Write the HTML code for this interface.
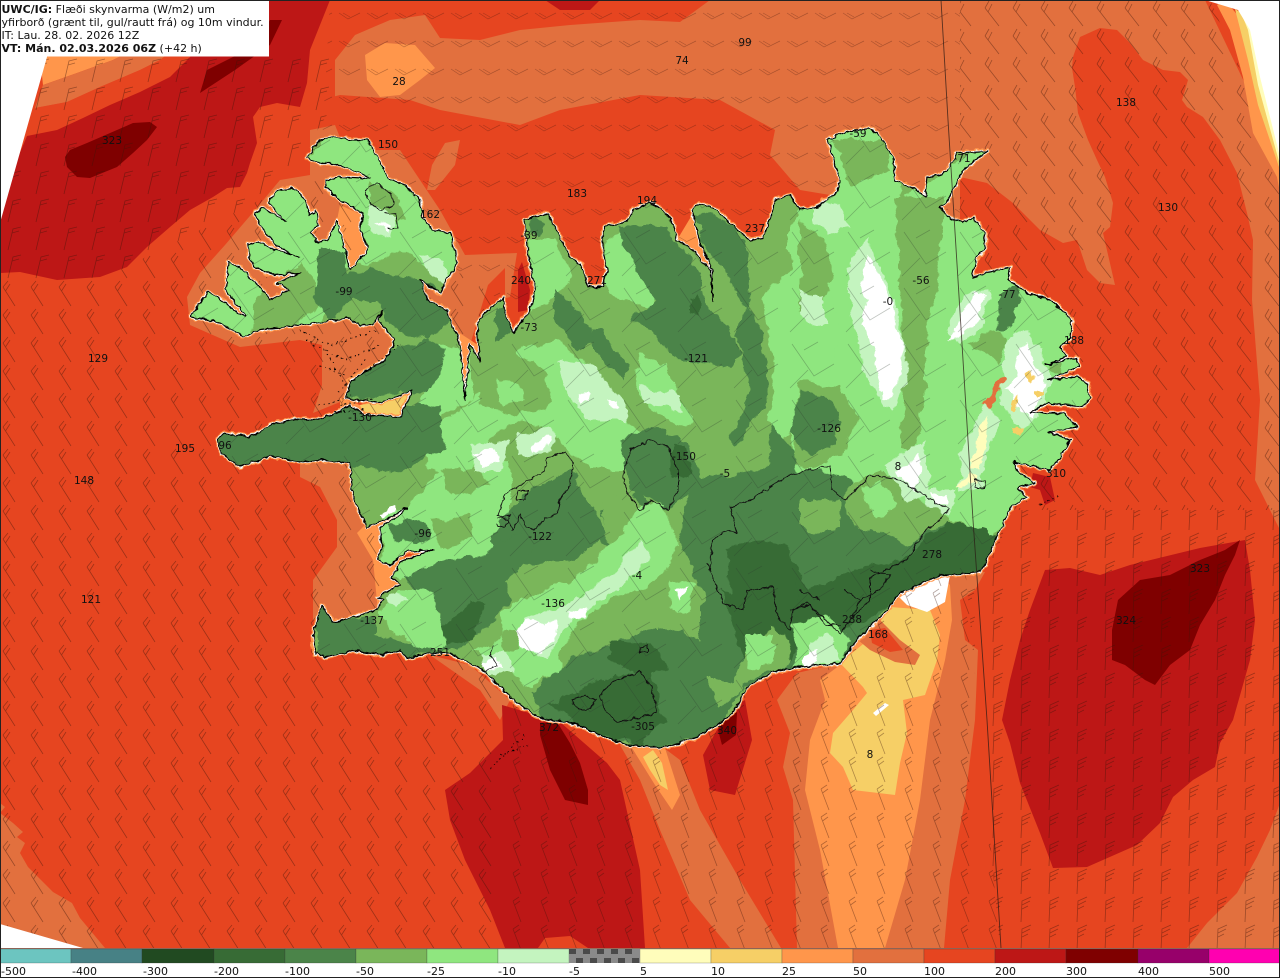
<!DOCTYPE html>
<html><head><meta charset="utf-8"><title>Flæði skynvarma</title>
<style>
html,body{margin:0;padding:0;background:#fff;width:1280px;height:978px;overflow:hidden}
svg{display:block}
text{font-family:"DejaVu Sans","Liberation Sans",sans-serif;font-size:11px;fill:#111}
.m text{text-anchor:middle;font-size:10.5px}
.a{fill:#8fe67f}.b{fill:#7ab65a}.c{fill:#4b8449}.d{fill:#376b35}.e{fill:#c4f4bf}.w{fill:#fff}
.o{fill:#e2703e}.r{fill:#e64520}.q{fill:#bd1716}.k{fill:#7f0000}.y{fill:#ff964b}.g{fill:#f6cf66}
</style></head><body>
<svg width="1280" height="978" viewBox="0 0 1280 978" xmlns="http://www.w3.org/2000/svg">
<defs>
<path id="L" d="M315,655L313,635 322,605 333,622 343,620 377,610 383,600 378,597 390,590 400,585 392,578 400,562 433,550 405,552 390,565 378,560 382,547 380,527 400,515 408,507 385,520 367,527 353,497 350,463 320,460 300,462 270,456 240,467 222,453 217,440 223,433 250,437 273,424 295,419 315,420 333,415 350,405 365,415 400,417 413,390 380,403 345,398 352,380 385,360 395,340 378,320 383,310 372,325 360,325 350,318 300,325 260,330 243,337 233,330 213,320 190,317 208,292 222,300 240,315 245,315 235,303 226,290 228,262 240,268 258,285 270,300 290,290 277,283 300,273 275,275 255,268 250,258 248,245 258,241 275,250 295,255 300,258 275,245 260,225 255,213 262,208 275,215 287,222 270,205 268,202 278,190 295,188 305,200 310,215 316,210 318,225 310,233 318,243 328,240 337,220 345,250 350,270 365,253 368,247 360,230 363,213 340,200 325,187 327,180 340,177 363,178 370,177 347,168 333,163 320,163 307,158 317,143 330,137 353,140 367,140 372,148 380,162 387,177 407,187 420,200 422,217 433,230 450,233 455,250 457,263 447,280 440,293 420,280 427,300 447,310 450,320 460,343 465,400 470,343 480,362 477,323 485,313 503,298 505,313 513,333 530,310 535,290 527,247 525,220 547,213 558,233 570,258 580,263 588,287 603,287 607,270 603,250 603,227 627,222 633,210 650,203 663,210 673,223 677,240 693,250 710,270 713,303 712,270 700,243 692,210 700,203 717,210 737,230 750,240 763,238 770,220 775,200 790,195 800,210 817,207 837,192 840,180 828,140 843,133 870,128 880,137 893,157 895,180 917,190 925,197 928,178 947,172 957,153 987,151 963,170 960,177 947,202 940,207 948,217 963,223 973,217 985,233 985,248 977,258 972,277 1010,267 1008,280 1027,293 1050,300 1062,310 1072,320 1070,338 1060,347 1067,357 1045,365 1077,358 1078,367 1048,380 1077,377 1087,383 1090,397 1083,407 1047,403 1030,413 1063,413 1077,427 1048,432 1070,440 1063,453 1050,470 1013,462 1020,473 1035,483 1017,488 1027,497 1012,505 1000,530 985,565 980,572 950,575 940,575 900,593 887,610 857,640 840,663 793,668 773,672 747,687 735,710 720,723 697,737 667,747 650,747 627,745 600,735 573,723 540,718 517,703 483,670 450,653 430,653 407,658 400,650 380,655 353,650 325,657 317,653Z"/>
<clipPath id="lc"><use href="#L"/></clipPath>
<filter id="n" x="0" y="0" width="1280" height="978" filterUnits="userSpaceOnUse" color-interpolation-filters="sRGB"><feTurbulence type="fractalNoise" baseFrequency=".05" numOctaves="2" seed="4"/><feDisplacementMap in="SourceGraphic" scale="13" xChannelSelector="R" yChannelSelector="G"/></filter>
<filter id="f" x="0" y="0" width="1280" height="978" filterUnits="userSpaceOnUse" color-interpolation-filters="sRGB"><feTurbulence type="fractalNoise" baseFrequency=".16" numOctaves="2" seed="9"/><feDisplacementMap in="SourceGraphic" scale="5" xChannelSelector="R" yChannelSelector="G"/></filter>
<pattern id="pW" width="28" height="28" patternUnits="userSpaceOnUse"><path d="M3 7L15 26M3 7L8 1M5.5 11L10 4" fill="none" stroke="#3a1208" stroke-width=".8" stroke-opacity=".42"/></pattern>
<pattern id="pT" width="28" height="28" patternUnits="userSpaceOnUse"><path d="M8 26L13 5L21 3M12 9L19 7" fill="none" stroke="#3a1208" stroke-width=".8" stroke-opacity=".42"/></pattern>
<pattern id="pN" width="28" height="28" patternUnits="userSpaceOnUse"><path d="M3 13L12 19L24 13M7 13L14 17" fill="none" stroke="#3a1208" stroke-width=".7" stroke-opacity=".32"/></pattern>
<pattern id="pE" width="28" height="28" patternUnits="userSpaceOnUse"><path d="M5 8L19 26M5 8L9 1M8 12L12 4" fill="none" stroke="#3a1208" stroke-width=".8" stroke-opacity=".42"/></pattern>
<pattern id="pS" width="28" height="28" patternUnits="userSpaceOnUse"><path d="M13 26L14 5L23 1M14 9L22 5M14 13L20 10" fill="none" stroke="#3a1208" stroke-width=".8" stroke-opacity=".42"/></pattern>
<pattern id="pC" width="28" height="28" patternUnits="userSpaceOnUse"><path d="M9 5L17 26M9 5L15 1M10.5 9L16 5" fill="none" stroke="#3a1208" stroke-width=".8" stroke-opacity=".38"/></pattern>
<pattern id="pL" width="56" height="56" patternUnits="userSpaceOnUse"><path d="M8 8L30 40L50 28M20 14L34 6M6 52L24 34" fill="none" stroke="#2a3a2a" stroke-width=".8" stroke-opacity=".3"/></pattern>
</defs>

<rect width="1280" height="948" class="r"/>
<!-- north/east ocean -->
<polygon class="o" points="335,95 335,60 355,35 390,20 425,15 440,38 480,40 520,30 570,25 640,20 680,22 710,0 1205,0 1280,157 1280,540 1000,540 960,300 600,300 335,200"/>
<polygon class="r" points="300,110 320,100 340,95 410,100 440,110 520,125 560,110 640,95 720,100 775,130 770,155 800,190 830,195 830,300 300,300"/>
<polygon class="o" points="427,190 432,165 445,143 460,140 455,165 435,190"/>
<polygon class="r" points="960,177 987,183 1013,203 1040,230 1063,243 1077,240 1087,270 1100,283 1115,285 1103,233 1110,227 1113,203 1105,177 1097,160 1088,140 1078,113 1075,87 1072,68 1073,57 1080,37 1100,28 1117,30 1130,43 1143,60 1163,70 1180,72 1188,80 1182,100 1187,107 1203,117 1220,140 1237,173 1247,213 1253,240 1252,300 1260,400 1255,480 1280,530 1280,803 1270,830 1257,857 1237,893 1207,923 1187,948 900,948 900,600 1000,540 1000,300 960,260"/>
<polygon class="o" points="1280,803 1270,830 1257,857 1237,893 1207,923 1187,948 1280,948"/>
<polygon class="y" points="365,55 385,43 415,45 435,68 420,80 400,95 380,97 367,80"/>
<polygon class="r" points="640,0 680,0 672,20 645,18"/>
<polygon class="q" points="545,0 600,0 590,10 560,10"/>
<!-- NW deep red -->
<polygon class="y" points="40,57 60,0 200,0 133,50 113,60 77,73 43,85"/>
<polygon class="o" points="43,85 77,73 113,60 133,50 200,0 260,0 197,50 173,50 160,60 140,70 100,87 67,102 35,108"/>
<polygon class="r" points="35,108 67,102 100,87 140,70 160,60 173,50 240,0 300,0 197,50 187,60 170,77 140,92 110,105 83,118 57,130 27,136"/>
<polygon class="q" points="27,136 57,130 83,118 110,105 140,92 170,77 187,60 197,50 260,0 330,0 310,50 307,83 300,107 277,103 260,107 253,117 257,143 250,163 247,173 240,187 227,188 213,197 190,210 170,227 147,247 127,267 100,277 57,280 20,272 0,273 0,200"/>
<polygon class="k" points="200,93 207,70 233,57 250,50 270,20 282,20 270,45 235,70"/>
<polygon class="k" points="65,157 70,150 87,143 117,130 133,123 150,122 157,127 147,140 133,153 117,167 90,178 77,177 67,167"/>
<!-- halos west -->
<polygon class="o" points="187,297 200,273 225,245 255,210 280,180 310,175 310,130 335,125 345,150 400,150 440,210 465,255 517,253 510,297 500,300 510,340 480,400 440,350 400,345 345,400 313,413 322,385 322,345 300,340 240,347 190,325"/>
<polygon class="r" points="470,345 488,285 505,268 505,300 490,320 478,345"/>
<polygon class="q" points="518,270 522,262 530,290 528,310 518,312"/>
<polygon class="y" points="340,205 362,215 365,250 350,270 345,250 337,220"/>
<polygon class="y" points="345,380 413,340 400,345 360,395"/>
<polygon class="y" points="340,398 360,405 413,388 405,420 340,420"/>
<polygon class="g" points="360,405 395,400 412,392 400,417 365,417"/>
<polygon class="y" points="677,240 692,215 700,245 712,270 713,303 703,275 693,250"/>
<polygon class="y" points="455,330 478,345 470,390 462,395"/>
<polygon class="o" points="300,477 320,487 337,520 337,547 313,580 313,620 330,625 377,615 400,585 390,520 350,463 300,462"/>
<polygon class="y" points="357,533 373,560 378,612 400,585 405,560 392,515 365,525"/>
<!-- SW corner -->
<polygon class="o" points="0,803 5,807 0,813 13,823 23,832 17,837 25,843 20,853 28,867 53,892 72,903 80,918 105,948 0,948"/>
<polygon class="o" points="430,655 470,665 510,700 500,720 480,690"/>
<!-- south deep red -->
<polygon class="q" points="502,705 560,722 607,763 620,780 640,870 645,948 505,948 490,910 465,860 450,820 445,790 470,773 503,740"/>
<polygon class="r" points="538,948 545,938 570,936 588,948"/>
<polygon class="k" points="540,723 557,722 570,743 580,763 588,790 588,805 565,800 550,770 540,735"/>
<polygon class="q" points="727,712 745,700 752,740 735,795 710,790 703,755"/>
<polygon class="k" points="725,715 737,712 736,735 722,745 718,730"/>
<!-- south tongue -->
<polygon class="o" points="620,745 660,745 680,760 700,810 740,880 781,948 730,948 690,900 660,830 640,780"/>
<polygon class="y" points="632,748 665,748 680,795 672,810 655,785"/>
<polygon class="g" points="643,757 653,750 662,763 668,790 660,785 650,770"/>
<!-- SE fan -->
<polygon class="o" points="797,673 777,700 790,733 783,767 793,800 797,948 944,948 950,880 965,800 975,720 978,650 965,640 960,600 975,590 985,572 940,575 900,593 857,640 840,663"/>
<polygon class="y" points="840,665 820,680 825,700 810,740 805,790 820,850 838,948 885,948 905,880 920,800 930,720 945,660 952,620 950,585 940,575 900,593 857,640"/>
<polygon class="g" points="840,663 863,687 867,693 853,710 833,733 830,753 843,767 853,790 895,795 900,763 907,733 903,700 925,695 937,660 940,635 930,610 890,607 868,640"/>
<polygon class="o" points="858,640 880,620 900,640 920,655 915,665 895,662 870,650"/>
<polygon class="r" points="870,630 885,628 903,650 890,652 872,643"/>
<polygon class="w" points="898,596 940,575 950,575 945,602 927,612 907,605"/>
<polygon class="w" points="873,713 885,703 889,705 876,716"/>
<polygon class="q" points="1002,720 1010,743 1020,783 1040,833 1053,868 1087,867 1137,845 1160,823 1173,797 1193,780 1215,767 1220,743 1233,720 1250,660 1255,620 1250,570 1245,540 1200,548 1130,565 1100,575 1070,568 1045,570 1030,610 1020,640 1010,680"/>
<polygon class="k" points="1240,540 1235,555 1225,575 1215,600 1200,625 1190,650 1170,665 1155,685 1145,680 1125,665 1112,660 1112,630 1118,600 1140,580 1170,575 1200,560 1225,550"/>
<polygon class="q" points="1033,473 1050,477 1055,500 1045,505 1040,490 1030,487"/>

<!-- barbs -->
<polygon fill="url(#pT)" points="40,57 340,57 330,110 280,190 100,280 0,280 0,225"/>
<polygon fill="url(#pW)" points="0,280 100,280 280,190 320,180 500,300 500,948 0,948"/>
<polygon fill="url(#pN)" points="330,0 960,0 960,300 500,300 320,180"/>
<polygon fill="url(#pE)" points="960,0 1210,0 1280,160 1280,510 1000,510 960,300"/>
<polygon fill="url(#pS)" points="960,510 1280,510 1280,948 1000,948"/>
<polygon fill="url(#pC)" points="500,600 960,510 1000,948 500,948"/>

<!-- white outside of domain -->
<polygon class="w" points="0,0 50,0 47,57 0,223"/>
<polygon class="w" points="0,924 83,948 0,948"/>
<polygon class="y" points="1217,5 1225,0 1250,30 1260,77 1280,157 1280,193 1277,177 1253,133 1243,77 1230,30"/>
<polygon class="g" points="1235,9 1245,15 1255,60 1268,115 1280,157 1280,170 1258,105 1248,60"/>
<polygon fill="#fffdbb" points="1240,10 1250,26 1262,77 1280,150 1280,165 1258,85 1248,30"/>
<polygon class="w" points="1205,0 1280,0 1280,157 1260,77 1250,30 1238,10"/>

<g filter="url(#f)">
<!-- coast halo -->
<use href="#L" fill="none" stroke="#ff964b" stroke-width="5" stroke-linejoin="round"/>
<use href="#L" fill="none" stroke="#fff" stroke-width="2.8" stroke-linejoin="round"/>

<!-- land -->
<g clip-path="url(#lc)">
<rect width="1280" height="948" class="b"/>
<g filter="url(#n)">
<!-- broad light -->
<polygon class="a" points="180,330 225,250 255,200 300,175 330,130 390,135 420,200 460,240 465,290 430,270 400,250 380,260 355,265 330,280 320,330 250,345"/>
<polygon class="a" points="790,230 830,120 900,120 900,200 990,140 990,260 1100,330 1100,420 1020,510 990,540 920,500 880,470 840,500 790,470"/>
<polygon class="a" points="440,345 470,350 470,400 440,415 415,420 425,385"/>
<polygon class="a" points="385,510 405,510 440,470 510,460 510,520 480,570 430,565 400,580 380,570"/>
<polygon class="a" points="520,350 560,340 590,370 600,400 630,420 660,450 640,470 590,470 560,440 520,420 490,440 470,480 430,470 420,440 470,400"/>
<polygon class="b" points="470,365 515,352 545,375 550,405 510,415 480,400"/>
<polygon class="b" points="440,470 480,465 490,485 450,495"/>
<polygon class="b" points="430,520 470,515 475,540 440,548"/>
<polygon class="a" points="495,380 520,385 525,400 500,405"/>
<polygon class="a" points="603,240 620,235 640,270 660,290 650,310 620,300 605,280"/>
<polygon class="a" points="530,240 555,240 570,275 555,300 530,310"/>
<polygon class="a" points="640,355 665,365 680,400 695,420 680,425 650,410 635,385"/>
<polygon class="a" points="762,300 790,270 830,270 840,330 830,390 800,420 780,440 765,420 775,380 770,340"/>
<!-- NE green stripes -->
<polygon class="b" points="895,197 945,197 945,220 935,290 925,350 925,390 915,450 900,450 905,390 905,350 900,290"/>
<polygon class="b" points="833,140 885,140 893,170 850,185 845,170"/>
<polygon class="b" points="800,220 825,240 835,280 825,300 800,310"/>
<polygon class="b" points="965,345 1000,330 1005,340 1000,365 985,350"/>
<polygon class="b" points="1050,365 1062,360 1060,372 1048,372"/>
<polygon class="c" points="1000,295 1015,285 1022,300 1010,325 997,330"/>
<polygon class="b" points="800,380 840,385 860,420 845,450 815,470 790,460"/>
<!-- NW darks -->
<polygon class="b" points="255,300 300,260 320,300 290,330 250,335"/>
<polygon class="b" points="370,180 400,200 405,220 375,225"/>
<polygon class="c" points="318,250 345,250 350,275 365,270 370,265 395,275 420,280 445,295 450,320 430,340 400,335 375,300 350,300 330,320 315,300"/>
<polygon class="c" points="345,400 350,375 395,345 430,340 445,350 440,375 425,390 395,395"/>
<polygon class="c" points="205,430 300,410 440,405 445,450 400,470 340,465 300,475 220,475"/>
<polygon class="c" points="495,310 505,305 510,325 495,345"/>
<polygon class="c" points="532,218 545,222 540,235 530,232"/>
<!-- north centre dark -->
<polygon class="c" points="617,230 633,227 667,227 677,247 690,257 700,273 710,307 730,330 740,350 733,367 697,363 673,357 660,343 633,317 657,300 640,277"/>
<polygon class="c" points="695,212 715,215 745,240 750,290 745,310 735,290 715,260 700,240"/>
<polygon class="c" points="747,305 760,330 767,360 770,385 755,420 735,450 728,440 745,410 750,390 745,360 735,335"/>
<polygon class="c" points="590,330 600,330 630,370 625,380 595,350"/>
<polygon class="c" points="555,290 570,300 595,340 580,350 555,320"/>
<polygon class="d" points="690,300 700,295 700,315 690,312"/>
<polygon class="c" points="800,393 825,395 840,415 835,440 815,455 800,450 790,430"/>
<polygon class="c" points="770,425 785,440 800,470 780,480 765,480"/>
<polygon class="c" points="620,440 660,425 690,445 700,480 670,510 630,490"/>
<polygon class="d" points="672,445 685,450 690,470 675,480"/>
<!-- south dark -->
<polygon class="c" points="500,520 530,490 570,470 590,500 620,560 600,540 570,560 530,565 500,560 480,570"/>
<polygon class="c" points="392,523 420,520 433,535 420,545 395,540"/>
<polygon class="c" points="403,577 433,563 467,557 477,560 490,547 513,533 540,527 530,560 503,583 513,600 500,610 487,623 457,650 433,650 440,613 427,600"/>
<polygon class="c" points="690,480 760,470 810,470 850,480 870,520 905,545 950,520 1000,540 985,575 900,595 860,640 840,665 780,670 740,690 720,730 650,750 590,735 540,720 530,690 570,660 620,640 660,625 700,640 700,590 680,540"/>
<polygon class="c" points="313,600 325,600 345,620 375,615 375,635 395,640 425,645 440,650 400,660 320,660"/>
<polygon class="c" points="600,510 640,490 660,520 640,530 610,530"/>
<polygon class="d" points="720,590 770,600 790,560 810,590 850,570 900,560 950,520 1000,540 980,575 900,595 880,615 840,630 800,625 770,620 760,640 740,620"/>
<polygon class="d" points="725,545 760,540 790,550 800,620 790,660 750,670 735,640 730,590"/>
<polygon class="d" points="550,705 600,680 650,670 665,720 640,745 590,733"/>
<polygon class="d" points="610,640 650,645 670,665 640,675 610,660"/>
<polygon class="d" points="440,630 470,600 485,605 470,640 445,645"/>
<!-- lighter patches south -->
<polygon class="b" points="800,500 840,500 840,527 815,535 800,525"/>
<polygon class="b" points="843,490 880,470 905,500 890,533 860,530 845,515"/>
<polygon class="a" points="860,490 880,480 895,505 875,520"/>
<polygon class="b" points="707,680 733,680 745,660 770,625 785,635 790,665 750,680 720,707"/>
<polygon class="a" points="747,633 773,633 773,663 750,670"/>
<polygon class="a" points="793,623 830,615 853,640 840,665 795,668"/>
<polygon class="e" points="808,640 830,635 840,660 812,666"/>
<polygon class="w" points="805,655 818,648 815,668 805,668"/>
<polygon class="b" points="653,560 690,570 705,600 690,625 660,615"/>
<polygon class="a" points="667,580 697,585 690,613 670,608"/>
<polygon class="w" points="675,590 690,588 680,600"/>
<polygon class="b" points="600,500 625,490 680,540 665,570 620,575"/>
<!-- diagonal bright band -->
<polygon class="a" points="503,610 520,600 570,580 610,550 640,505 665,505 680,545 660,575 640,590 610,600 580,620 560,650 560,670 530,685 500,670 480,655 470,650 500,640"/>
<polygon class="e" points="520,640 525,620 570,605 610,575 640,540 650,560 620,590 590,605 565,630 545,660"/>
<polygon class="e" points="480,655 505,650 512,675 490,675"/>
<polygon class="w" points="513,635 527,622 557,620 555,640 540,652 528,648"/>
<polygon class="w" points="570,612 585,605 583,617 572,620"/>
<polygon class="w" points="483,662 498,658 500,670 487,672"/>
<polygon class="b" points="500,635 515,630 520,645 505,650"/>
<polygon class="a" points="378,612 400,590 430,590 440,615 430,625 395,635"/>
<polygon class="a" points="400,625 440,615 445,645 415,650"/>
<polygon class="e" points="385,600 400,590 410,600 395,610"/>
<polygon class="w" points="380,512 393,503 395,510 383,518"/>
<!-- centre whites -->
<polygon class="e" points="557,360 590,365 625,400 627,420 590,420 565,390"/>
<polygon class="w" points="578,393 590,393 590,403 580,403"/>
<polygon class="w" points="607,397 617,403 616,410 608,406"/>
<polygon class="e" points="470,445 510,440 505,470 475,470"/>
<polygon class="w" points="473,452 498,448 500,462 482,467"/>
<polygon class="e" points="515,435 552,430 555,450 520,455"/>
<polygon class="w" points="530,443 550,438 550,447 533,450"/>
<polygon class="e" points="640,385 680,395 680,410 645,405"/>
<!-- NE whites -->
<polygon class="e" points="845,270 868,240 890,290 905,340 910,380 890,410 865,380 855,330"/>
<polygon class="w" points="860,270 868,255 880,275 892,300 895,320 905,345 900,375 892,395 885,400 875,370 870,340 860,325 867,300"/>
<polygon class="e" points="815,200 840,205 850,225 830,235 815,225"/>
<polygon class="e" points="800,290 825,295 825,325 805,325"/>
<polygon class="e" points="945,330 965,295 990,290 985,325 960,345"/>
<polygon class="w" points="948,340 965,310 972,295 985,295 980,320 960,335"/>
<polygon class="e" points="1005,340 1030,330 1050,380 1045,410 1020,430 1000,400"/>
<polygon class="w" points="1015,350 1025,340 1030,355 1045,385 1040,400 1030,420 1012,400 1005,390 1018,375"/>
<polygon class="g" points="1028,372 1034,370 1035,380 1030,382"/>
<polygon class="g" points="1035,388 1045,388 1045,395 1036,396"/>
<polygon class="g" points="1010,427 1022,428 1020,436 1010,436"/>
<polygon class="g" points="1012,402 1018,398 1016,412 1012,410"/>
<polygon class="o" points="982,405 1000,377 1004,380 988,408"/>
<polygon class="e" points="960,450 985,405 1000,420 985,470 965,490"/>
<polygon fill="#fffdbb" points="970,470 975,440 985,415 990,440 980,470"/>
<polygon class="e" points="885,465 925,440 930,495 905,500"/>
<polygon class="w" points="897,473 920,453 918,490 900,477"/>
<polygon class="e" points="925,490 955,490 950,515 930,510"/>
<polygon class="w" points="932,495 945,495 945,505 935,505"/>
<polygon class="e" points="955,485 975,470 985,485 960,495"/>
<polygon fill="#fffdbb" points="955,487 972,475 978,483 960,490"/>
<polygon class="e" points="370,205 395,215 390,240 372,230"/>
<polygon class="w" points="378,222 390,225 388,235"/>
<polygon class="e" points="420,255 445,260 450,285 430,278"/>
</g>
</g>

<!-- coast -->
<use href="#L" fill="none" stroke="#000" stroke-width="1.2" stroke-linejoin="round"/>
<!-- glaciers -->
<g fill="none" stroke="#111" stroke-width="1">
<path d="M365,190L376,183 392,195 394,205 380,210 370,203ZM385,213L395,215 397,228 388,228"/>
<path d="M498,515L505,495 515,488 530,480 545,470 548,458 565,452 573,462 570,485 560,500 556,515 545,518 535,530 525,525 520,515 512,530 508,520Z"/>
<path d="M623,475L630,450 650,440 668,447 678,470 678,490 668,510 650,500 640,510 628,495Z"/>
<path d="M710,570L712,540 727,530 737,533 730,507 750,500 790,475 830,465 832,490 845,500 870,475 900,480 915,490 950,510 923,533 907,560 870,577 870,600 857,613 840,633 807,603 793,610 790,630 777,617 773,587 747,590 743,610 723,603 717,587 707,563"/>
<path d="M600,695L615,680 640,672 652,688 657,712 640,718 618,722 605,710Z"/>
<path d="M572,700L585,695 596,700 590,710 578,710Z"/>
<path d="M640,648L648,645 648,652 640,652ZM518,490L528,490 525,500 516,500ZM498,518L510,515 505,527 496,525M493,645L490,655 497,665 485,672M860,600L880,590 890,575 870,570M845,590L860,600 852,620M790,610L810,605 825,625 840,625M800,590L820,600"/>
<path d="M975,480L985,482 984,488 975,487Z"/>
</g>
<!-- islets -->
<g fill="none" stroke="#000" stroke-width="1">
<path stroke-dasharray="1.5 3.5" d="M300,330L330,345 362,335 378,330M305,340L345,360 380,345M325,350L345,385 375,365M320,365L345,375M338,392L380,360 400,345M318,405L340,400 352,395M345,385L365,360"/>
<path stroke-dasharray="1.2 3" d="M490,768L525,735M500,755L530,745"/>
<path stroke-dasharray="1.5 3" d="M340,405L375,398M335,412L365,410M1040,505L1060,495"/>
</g>
</g>
<g clip-path="url(#lc)"><rect width="1280" height="948" fill="url(#pL)"/></g>

<!-- meridian -->
<polyline points="941,0 948,120 973,520 987,720 1001,948" fill="none" stroke="#2a1a14" stroke-width=".9" stroke-opacity=".75"/>

<g class="m">
<text x="399" y="85">28</text><text x="745" y="46">99</text><text x="682" y="64">74</text><text x="1126" y="106">138</text><text x="1168" y="211">130</text><text x="112" y="144">323</text><text x="388" y="148">150</text><text x="577" y="197">183</text><text x="858" y="137">-59</text><text x="962" y="162">-71</text><text x="430" y="218">162</text><text x="647" y="204">194</text><text x="755" y="232">237</text><text x="529" y="239">-39</text><text x="521" y="284">240</text><text x="597" y="284">271</text><text x="529" y="331">-73</text><text x="344" y="295">-99</text><text x="888" y="305">-0</text><text x="921" y="284">-56</text><text x="1007" y="298">-77</text><text x="1074" y="344">188</text><text x="98" y="362">129</text><text x="696" y="362">-121</text><text x="360" y="421">-130</text><text x="185" y="452">195</text><text x="225" y="449">96</text><text x="829" y="432">-126</text><text x="684" y="460">-150</text><text x="725" y="477">-5</text><text x="898" y="470">8</text><text x="1056" y="477">310</text><text x="84" y="484">148</text><text x="423" y="537">-96</text><text x="540" y="540">-122</text><text x="932" y="558">278</text><text x="1200" y="572">323</text><text x="637" y="579">-4</text><text x="91" y="603">121</text><text x="553" y="607">-136</text><text x="1126" y="624">324</text><text x="372" y="624">-137</text><text x="878" y="638">168</text><text x="852" y="623">288</text><text x="440" y="656">251</text><text x="549" y="731">372</text><text x="727" y="734">340</text><text x="643" y="730">-305</text><text x="870" y="758">8</text>
</g>

<!-- title box -->
<rect x="0" y="0" width="269" height="56.5" fill="#fff"/>
<text x="1.5" y="13"><tspan font-weight="bold">UWC/IG:</tspan> Flæði skynvarma (W/m2) um</text>
<text x="1.5" y="26">yfirborð (grænt til, gul/rautt frá) og 10m vindur.</text>
<text x="1.5" y="39">IT: Lau. 28. 02. 2026 12Z</text>
<text x="1.5" y="52"><tspan font-weight="bold">VT: Mán. 02.03.2026 06Z</tspan> (+42 h)</text>

<!-- colour bar -->
<rect x="0" y="948" width="1280" height="30" fill="#fff"/>
<rect x="0" y="948" width="1280" height="1" fill="#9a6a5a"/>
<g stroke="#333" stroke-opacity=".35" stroke-width=".7">
<rect x="0" y="949" width="71" height="14" fill="#6cc5c0"/>
<rect x="71" y="949" width="71" height="14" fill="#478185"/>
<rect x="142" y="949" width="72" height="14" fill="#214a21"/>
<rect x="214" y="949" width="71" height="14" fill="#376b35"/>
<rect x="285" y="949" width="71" height="14" fill="#4b8449"/>
<rect x="356" y="949" width="71" height="14" fill="#7ab65a"/>
<rect x="427" y="949" width="71" height="14" fill="#8fe67f"/>
<rect x="498" y="949" width="71" height="14" fill="#c4f4bf"/>
<rect x="640" y="949" width="71" height="14" fill="#fffdbb"/>
<rect x="711" y="949" width="71" height="14" fill="#f6cf66"/>
<rect x="782" y="949" width="71" height="14" fill="#ff964b"/>
<rect x="853" y="949" width="71" height="14" fill="#e2703e"/>
<rect x="924" y="949" width="71" height="14" fill="#e64520"/>
<rect x="995" y="949" width="71" height="14" fill="#bd1716"/>
<rect x="1066" y="949" width="72" height="14" fill="#7f0000"/>
<rect x="1138" y="949" width="71" height="14" fill="#97006a"/>
<rect x="1209" y="949" width="71" height="14" fill="#ff00b0"/>
</g>
<rect x="569" y="949" width="71" height="14" fill="#8a8a8a"/>
<path fill="#4a4a4a" d="M569,949h7v5h-7zM583,949h7v5h-7zM597,949h7v5h-7zM611,949h7v5h-7zM625,949h7v5h-7zM576,958h7v5h-7zM590,958h7v5h-7zM604,958h7v5h-7zM618,958h7v5h-7zM632,958h7v5h-7z"/>
<g>
<text x="1" y="975">-500</text><text x="72" y="975">-400</text><text x="143" y="975">-300</text><text x="214" y="975">-200</text><text x="285" y="975">-100</text><text x="356" y="975">-50</text><text x="427" y="975">-25</text><text x="498" y="975">-10</text><text x="569" y="975">-5</text><text x="640" y="975">5</text><text x="711" y="975">10</text><text x="782" y="975">25</text><text x="853" y="975">50</text><text x="924" y="975">100</text><text x="995" y="975">200</text><text x="1066" y="975">300</text><text x="1138" y="975">400</text><text x="1209" y="975">500</text>
</g>
<rect x=".5" y=".5" width="1279" height="977" fill="none" stroke="#222" stroke-width="1"/>
</svg>
</body></html>
